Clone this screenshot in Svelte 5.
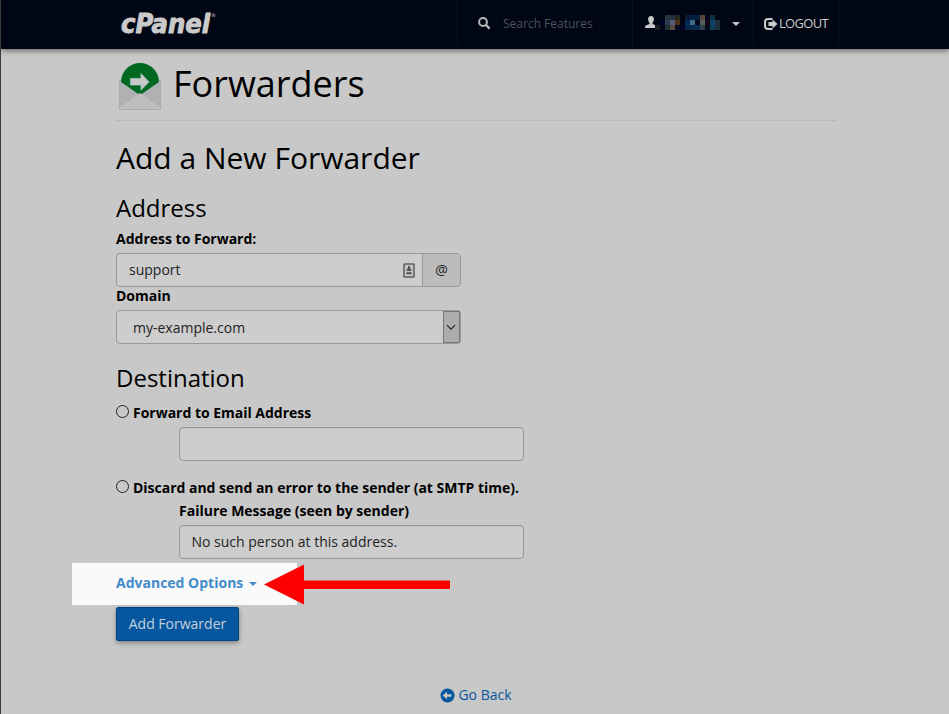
<script>
  let address = $state('support');
  let email = $state('');
  let failure = $state('No such person at this address.');

  const mosaic = [
    ['', '', '#24333d', '#242f3d', '#252320', '', '#031936', '#03203f', '#03203f', '#56463c', '#010518', '#0a3045', ''],
    ['', '#01062c', '#2d3c48', '#5a5a78', '#4a3212', '#010516', '#042a58', '#3a6d85', '#02081a', '#5a6058', '#150518', '#0d4266', '#1c2f3b'],
    ['#1a2020', '', '#222f38', '#554f42', '#050c24', '#020728', '#062848', '#062a4c', '#062e4f', '#2f4048', '#03081c', '#123c5c', '#1c2f3b']
  ];
</script>

<div class="page">
  <header>
    <div class="logo" aria-label="cPanel">
      <svg width="91" height="26" viewBox="0 0 91 26"><text x="2" y="22.500" textLength="89" lengthAdjust="spacingAndGlyphs">cPanel</text></svg>
      <small>®</small>
    </div>
    <div class="cell search">
      <svg width="13" height="13" viewBox="0 0 13 13"><circle cx="5" cy="5" r="3.9" fill="none" stroke="#b5b9b9" stroke-width="2" /><path d="M8 8l3.6 3.6" stroke="#b5b9b9" stroke-width="2.4" /></svg>
      <span>Search Features</span>
    </div>
    <div class="cell user">
      <svg width="12" height="12" viewBox="0 0 12 12"><path d="M6 0C4 0 3 1.3 3.1 3.3c.1 1.6.8 2.800 1.400 3.600v1L1.200 9.300C.3 9.800 0 10.500 0 12h12c0-1.500-.3-2.200-1.200-2.700L7.500 7.900v-1C8.100 6.100 8.800 4.900 8.900 3.300 9 1.300 8 0 6 0z" fill="#cacaca" /></svg>
      <svg class="mosaic" width="65" height="15" viewBox="0 0 65 15" shape-rendering="crispEdges">
        {#each mosaic as row, y}
          {#each row as color, x}
            {#if color}<rect x={x * 5} y={y * 5} width="5" height="5" fill={color} />{/if}
          {/each}
        {/each}
      </svg>
      <i class="caret"></i>
    </div>
    <div class="cell logout">
      <svg width="14" height="12" viewBox="0 0 14 12"><path d="M8.500 1H4Q1 1 1 4v4q0 3 3 3h4.500" fill="none" stroke="#cacaca" stroke-width="2" /><path d="M4.500 4H8.500V1.500L13.500 6 8.500 10.500V8H4.500z" fill="#cacaca" /></svg>
      <span>LOGOUT</span>
    </div>
  </header>

  <main>
    <div class="title">
      <svg width="44" height="48" viewBox="0 0 44 48">
        <path d="M1 18L7 13H37L43 18V47H1z" fill="#b0b1b3" />
        <path d="M1.500 46.500V44L20 30.700q2-1.400 4 0L42.500 44v2.500z" fill="#bebebe" stroke="#acacad" stroke-width=".7" />
        <path d="M3 19A19 19 0 0 1 41 19L24 30.800q-2-1.200-4 0L3 19z" fill="#00681f" />
        <path d="M12 15H22.500V9.500L31.500 19 22.500 28V22.500H12z" fill="#c9c9c9" stroke="#168a50" stroke-width=".6" />
        <path d="M1.500 17.500V46.500H42.500V17.500" fill="none" stroke="#a7a8a9" stroke-width=".7" />
      </svg>
      <h1>Forwarders</h1>
    </div>
    <h2>Add a New Forwarder</h2>

    <h3>Address</h3>
    <label class="name" for="address">Address to Forward:</label>
    <div class="group">
      <input id="address" bind:value={address} />
      <svg width="12" height="15" viewBox="0 0 12 15"><rect x="1" y="1" width="10" height="13" rx=".5" fill="#c6c6c6" stroke="#626262" stroke-width="1.600" /><path d="M5 3h2v2.500h1.300V8H3.700V5.500H5zM3.300 9.300h5.400v2H3.300z" fill="#555" /></svg>
      <span class="at">@</span>
    </div>
    <div class="name domain">Domain</div>
    <div class="select">
      <span>my-example.com</span>
      <b><svg width="10" height="7" viewBox="0 0 10 7"><path d="M1 1.200l4 4 4-4" fill="none" stroke="#222" stroke-width="1.200" /></svg></b>
    </div>

    <h3 class="dest">Destination</h3>
    <label class="radio"><input type="radio" name="destination" value="forward" /><span>Forward to Email Address</span></label>
    <input class="field first" aria-label="Email address" bind:value={email} />
    <label class="radio second"><input type="radio" name="destination" value="discard" /><span>Discard and send an error to the sender (at SMTP time).</span></label>
    <label class="name failure" for="failure">Failure Message (seen by sender)</label>
    <input class="field" id="failure" bind:value={failure} />

    <div class="advanced">
      <span>Advanced Options</span><i class="caret"></i>
      <svg class="arrow" width="188" height="42" viewBox="0 0 188 42"><path d="M40 17.500H186V26H40z" fill="#fe0000" /><path d="M0 21.500L40 1.500V41.500z" fill="#fe0000" /></svg>
    </div>
    <button>Add Forwarder</button>
    <div class="back">
      <svg width="15" height="15" viewBox="0 0 15 15"><circle cx="7.500" cy="7.500" r="7" fill="#0757a0" /><path d="M2.700 7.500L7 3.700V6.300h4.500v2.400H7v2.600z" fill="#c9c9c9" /></svg>
      <span>Go Back</span>
    </div>
  </main>
</div>

<style>
  :global(body) { margin: 0; background: #c8c8c8; overflow: hidden; }
  * { box-sizing: border-box; }
  .page {
    height: 714px; overflow: hidden; background: #c8c8c8; border-left: 1px solid #3a3a3a;
    font: 14px/20px "Open Sans", sans-serif; color: #000;
  }
  header {
    height: 49px; display: flex; background: #000614; color: #cacaca;
    box-shadow: 0 2px 5px rgba(0, 0, 0, .45); font-size: 13px;
  }
  .logo { display: flex; width: 338px; margin: 10px 0 0 118px; flex: none; }
  .logo svg { overflow: visible; flex: none; }
  .logo text {
    font: italic 700 26px "DejaVu Sans Condensed", "DejaVu Sans", sans-serif; font-stretch: condensed;
    fill: #cacaca; stroke: #cacaca; stroke-width: .9px; stroke-linejoin: round;
  }
  .logo small { font: 5px/6px "DejaVu Sans", sans-serif; margin: 2px 0 0 1px; }
  .cell { display: flex; align-items: center; height: 47px; border-left: 1px solid #04151d; flex: none; }
  .search { width: 175px; padding-left: 20px; color: #4c5358; font-size: 12px; }
  .search span { margin-left: 12px; }
  .user { width: 121px; padding-left: 12px; }
  .user svg:first-child { margin-top: -4px; }
  .mosaic { margin: -2px 0 0 -2px; }
  .caret { border: 4px solid transparent; border-top-color: currentColor; border-bottom: 0; }
  .user .caret { margin-left: 12px; margin-top: 1px; }
  .cell.logout { width: 86px; padding-left: 10px; border-right: 1px solid #04151d; }
  .logout span { margin: -2px 0 0 1px; letter-spacing: -.7px; }

  main { width: 720px; margin-left: 115px; }
  .title { height: 72px; border-bottom: 1px solid #b9b9b9; display: flex; align-items: flex-start; }
  .title svg { margin: 14px 0 0 2px; }
  h1, h2, h3 { margin: 0; font-weight: 400; }
  h1 { font-size: 36px; line-height: 40px; margin: 15px 0 0 11px; }
  h2 { font-size: 30px; line-height: 40px; margin-top: 17px; }
  h3 { font-size: 24px; line-height: 30px; margin-top: 15px; }
  .name { display: block; font-weight: 700; height: 20px; margin-top: 6px; }
  .group {
    display: flex; align-items: center; width: 345px; height: 34px; margin-top: 4px;
    border: 1px solid #999; border-radius: 4px; overflow: hidden; background: #cdcdcd;
  }
  input, .select, button { font: 14px/20px "Open Sans", sans-serif; }
  .group input { width: 286px; height: 32px; border: 0; padding: 0 12px 2px; background: transparent; outline: 0; color: #222; }
  .at {
    margin-left: auto; width: 38px; height: 32px; line-height: 32px; text-align: center;
    background: #bcbcbc; border-left: 1px solid #999; color: #222;
  }
  .domain { margin-top: -1px; }
  .select {
    width: 345px; height: 34px; margin-top: 4px; display: flex; align-items: center; justify-content: space-between;
    border: 1px solid #999; border-radius: 4px; padding-left: 16px; background: #cdcdcd; color: #222;
  }
  .select span { padding-top: 1px; }
  .select b { width: 17px; height: 32px; padding-right: 1px; border: 1px solid #777; background: #adadad; display: flex; align-items: center; justify-content: center; }
  .dest { margin-top: 19px; }
  .radio { display: flex; align-items: flex-start; height: 20px; margin-top: 10px; font-weight: 700; letter-spacing: -.015px; }
  .radio input {
    appearance: none; width: 13px; height: 13px; margin: 2px 4px 0 0; border: 1px solid #222;
    border-radius: 50%; background: #c9c9c9; flex: none;
  }
  .field {
    display: block; width: 345px; height: 34px; margin: 4px 0 0 63px; padding: 0 12px 2px 11.5px;
    border: 1px solid #999; border-radius: 4px; background: #cdcdcd; color: #222; outline: 0;
    box-shadow: inset 0 1px 1px rgba(0, 0, 0, .06);
  }
  .radio.second { margin-top: 17px; }
  .failure { margin: 3px 0 0 63px; }
  .advanced {
    position: relative; display: flex; align-items: center; width: 225px; height: 42px; margin: 4px 0 2px -44px;
    padding: 0 0 2px 44px; background: #fafafa; color: #428bca; font-weight: 700;
  }
  .advanced .caret { margin-left: 6px; margin-top: 2px; }
  .arrow { position: absolute; left: 192px; top: 0; }
  button {
    display: block; width: 123px; height: 34px; padding: 0; color: #c3cfd9; background: #0757a0;
    border: 1px solid #04437e; border-radius: 2px; box-shadow: 0 2px 5px rgba(0, 0, 0, .35);
  }
  .back { display: flex; align-items: center; justify-content: center; height: 20px; margin-top: 44px; color: #0757a0; }
  .back span { margin-left: 3px; }
</style>
